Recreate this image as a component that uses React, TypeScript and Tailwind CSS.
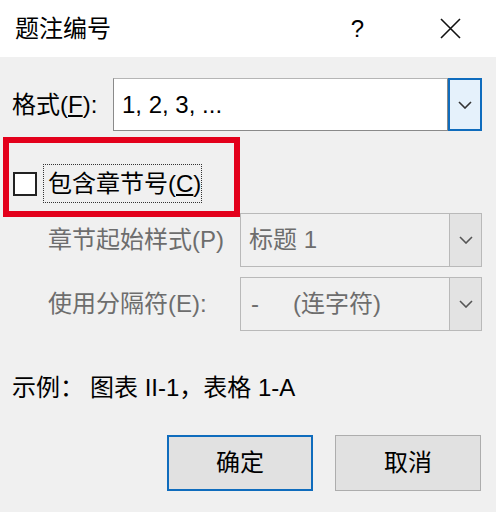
import React from "react";

const FONT = { fontFamily: '"Liberation Sans", "Noto Sans CJK SC", sans-serif' };

function Chevron({ color = "#333" }: { color?: string }) {
  return (
    <svg width="14" height="8" viewBox="0 0 14 8" fill="none">
      <path d="M1 1 L7 7 L13 1" stroke={color} strokeWidth="1.6" />
    </svg>
  );
}

export default function App() {
  return (
    <div className="relative w-[496px] h-[512px] bg-[#f0f0f0] text-black overflow-hidden flex flex-col" style={FONT}>
      {/* Title bar */}
      <div className="h-[57px] bg-white flex items-center shrink-0">
        <div className="ml-[15px] text-[24px] leading-none">题注编号</div>
        <div className="ml-auto mr-[76px] text-[24px] leading-none">?</div>
        <svg className="mr-[35px]" width="21" height="21" viewBox="0 0 21 21">
          <path d="M1 1 L20 20 M20 1 L1 20" stroke="#111" strokeWidth="1.6" />
        </svg>
      </div>

      {/* Format row */}
      <div className="mt-[21px] h-[53px] flex items-center pl-[12px]">
        <div className="w-[101px] text-[24px] leading-none whitespace-nowrap">
          格式(<span className="underline underline-offset-2">F</span>):
        </div>
        <div className="w-[335px] h-full bg-white border border-[#8a8a8a] border-t-[#b5b5b5] flex items-center pl-[8px] text-[24px] leading-none whitespace-nowrap">
          1, 2, 3, ...
        </div>
        <div className="w-[34px] h-full border-2 border-[#0f6cbd] bg-[#e5f1fb] flex items-center justify-center">
          <Chevron />
        </div>
      </div>

      {/* Checkbox row */}
      <div className="mt-[33px] h-[39px] flex items-center pl-[13px]">
        <div className="w-[24px] h-[24px] border-2 border-[#222] bg-white shrink-0" />
        <div className="ml-[6px] h-full w-[159px] border border-dotted border-[#333] flex items-center pl-[4px] text-[24px] leading-none whitespace-nowrap">
          包含章节号(<span className="underline underline-offset-2">C</span>)
        </div>
      </div>

      {/* Chapter style row */}
      <div className="mt-[10px] h-[54px] flex items-center pl-[48px]">
        <div className="w-[192px] text-[24px] leading-none text-[#6d6d6d] whitespace-nowrap">章节起始样式(P)</div>
        <div className="w-[209px] h-full bg-[#f0f0f0] border border-[#b9b9b9] border-r-0 flex items-center pl-[8px] text-[24px] leading-none text-[#6d6d6d]">
          标题 1
        </div>
        <div className="w-[33px] h-full border border-[#b9b9b9] bg-[#e3e3e3] flex items-center justify-center">
          <Chevron color="#555" />
        </div>
      </div>

      {/* Separator row */}
      <div className="mt-[10px] h-[54px] flex items-center pl-[48px]">
        <div className="w-[192px] text-[24px] leading-none text-[#6d6d6d] whitespace-nowrap">使用分隔符(E):</div>
        <div className="w-[209px] h-full bg-[#f0f0f0] border border-[#b9b9b9] border-r-0 flex items-center pl-[10px] text-[24px] leading-none text-[#6d6d6d]">
          <span>-</span>
          <span className="ml-[34px]">(连字符)</span>
        </div>
        <div className="w-[33px] h-full border border-[#b9b9b9] bg-[#e3e3e3] flex items-center justify-center">
          <Chevron color="#555" />
        </div>
      </div>

      {/* Example */}
      <div className="mt-[41px] h-[32px] flex items-center pl-[12px] text-[24px] leading-none whitespace-nowrap">
        <span>示例：</span>
        <span className="ml-[6px]">图表 II-1，表格 1-A</span>
      </div>

      {/* Buttons */}
      <div className="mt-[31px] flex justify-end pr-[15px] gap-[22px]">
        <div className="w-[146px] h-[56px] border-2 border-[#0f6cbd] bg-[#e1e1e1] flex items-center justify-center text-[24px] leading-none">
          确定
        </div>
        <div className="w-[146px] h-[56px] border border-[#adadad] bg-[#e1e1e1] flex items-center justify-center text-[24px] leading-none">
          取消
        </div>
      </div>

      {/* Red annotation box */}
      <div className="absolute left-[3px] top-[137px] w-[237px] h-[80px] border-[6px] border-[#e3001b]" />
    </div>
  );
}
